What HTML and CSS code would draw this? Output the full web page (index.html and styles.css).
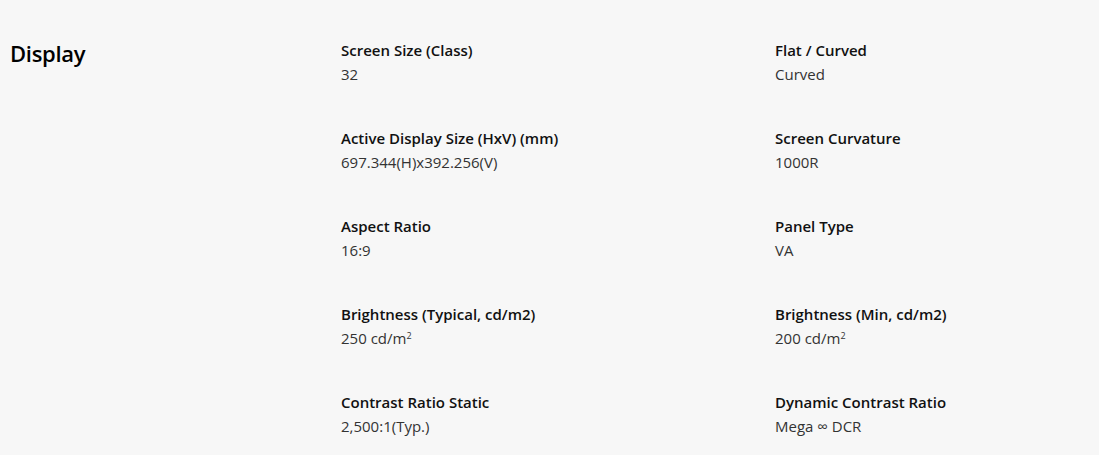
FILE: index.html
```html
<!DOCTYPE html>
<html lang="en">
<head>
<meta charset="utf-8">
<link rel="stylesheet" href="styles.css">
</head>
<body>
<section class="spec">
  <h2 class="spec-title">Display</h2>
  <div class="spec-grid">
    <div class="item"><div class="label">Screen Size (Class)</div><div class="value">32</div></div>
    <div class="item"><div class="label">Flat / Curved</div><div class="value">Curved</div></div>
    <div class="item"><div class="label">Active Display Size (HxV) (mm)</div><div class="value">697.344(H)x392.256(V)</div></div>
    <div class="item"><div class="label">Screen Curvature</div><div class="value">1000R</div></div>
    <div class="item"><div class="label">Aspect Ratio</div><div class="value">16:9</div></div>
    <div class="item"><div class="label">Panel Type</div><div class="value">VA</div></div>
    <div class="item"><div class="label">Brightness (Typical, cd/m2)</div><div class="value">250 cd/m<sup>2</sup></div></div>
    <div class="item"><div class="label">Brightness (Min, cd/m2)</div><div class="value">200 cd/m<sup>2</sup></div></div>
    <div class="item"><div class="label">Contrast Ratio Static</div><div class="value">2,500:1(Typ.)</div></div>
    <div class="item"><div class="label">Dynamic Contrast Ratio</div><div class="value">Mega ∞ DCR</div></div>
  </div>
</section>
</body>
</html>
```
FILE: styles.css
```css
html, body {
  margin: 0;
  padding: 0;
  background: #f7f7f7;
}
body {
  font-family: "Open Sans", "Noto Sans", sans-serif;
  color: #000;
}
.spec {
  display: flex;
  padding: 38px 0 0 10px;
}
.spec-title {
  width: 331px;
  margin: 0;
  font-size: 22px;
  font-weight: 600;
  line-height: 30px;
  letter-spacing: -0.3px;
  color: #000;
}
.spec-grid {
  display: grid;
  grid-template-columns: 434px 1fr;
  row-gap: 40px;
}
.item {
  line-height: 24px;
  font-size: 15px;
}
.label {
  font-weight: 600;
  color: #111;
}
.value {
  color: #333;
}
.value sup {
  font-size: 9px;
  line-height: 0;
  vertical-align: 5px;
}
```
